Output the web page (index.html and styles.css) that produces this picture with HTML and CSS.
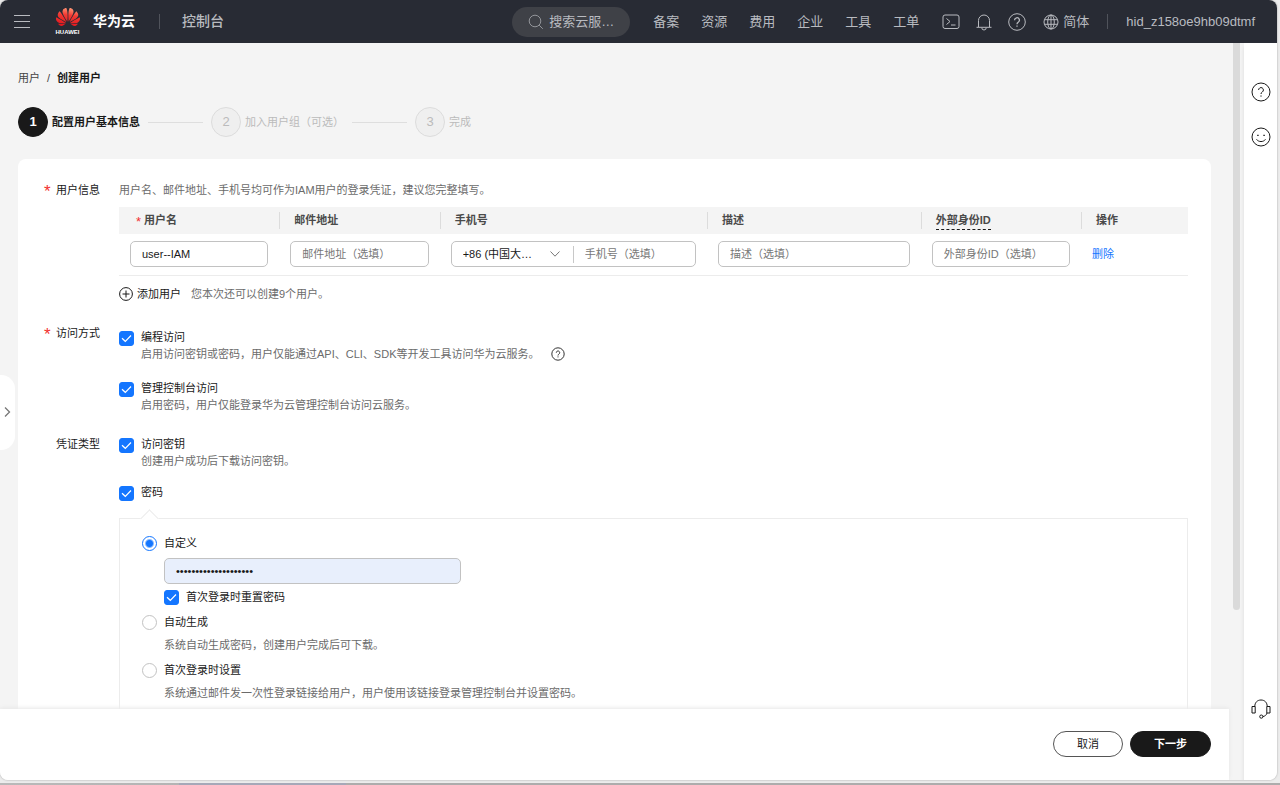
FILE: index.html
```html
<!doctype html>
<html lang="zh-CN">

<head>
    <meta charset="utf-8">
    <title>创建用户</title>

    <link rel="stylesheet" href="styles.css">
</head>

<body>
    <div class="window">
        <header class="topbar">
            <button class="icon-btn menu-btn" aria-label="菜单">
                <svg width="16" height="16" viewBox="0 0 16 16"><path d="M0 1.5h16M0 7.500h16M0 13.5h16" /></svg>
            </button>
            <a class="brand" href="#">
                <svg width="26" height="28" viewBox="0 0 26 28" aria-hidden="true">
                    <defs>
                        <linearGradient id="petal" x1="0.6" y1="0" x2="0.4" y2="1">
                            <stop offset="0" stop-color="#ff9a78" />
                            <stop offset="0.4" stop-color="#f23a33" />
                            <stop offset="1" stop-color="#e0161e" />
                        </linearGradient>
                    </defs>
                    <path transform="translate(1 -3)" fill="url(#petal)" d="M3.67 6.14S1.82 7.91 1.72 9.78v.35c.08 1.51 1.22 2.4 1.22 2.4 1.83 1.79 6.26 4.04 7.3 4.55 0 0 .06.03.1-.01l.02-.04v-.04C7.52 10.8 3.67 6.14 3.67 6.14zM9.65 18.6c-.02-.08-.1-.08-.1-.08l-7.38.26c.8 1.43 2.15 2.53 3.56 2.2.96-.25 3.16-1.78 3.88-2.3.06-.05.04-.09.04-.09zm.08-.78C6.49 15.63.21 12.28.21 12.28c-.15.46-.2.9-.21 1.3v.07c0 1.07.4 1.82.4 1.82.8 1.69 2.34 2.2 2.34 2.2.7.3 1.4.31 1.4.31.12.02 4.4 0 5.54 0 .05 0 .08-.05.08-.05v-.06c0-.03-.03-.05-.03-.05zM9.06 3.19a3.42 3.42 0 00-2.57 3.15v.41c.03.6.16 1.05.16 1.05.66 2.9 3.86 7.65 4.55 8.65.05.05.1.03.1.03a.1.1 0 00.06-.1c1.06-10.6-1.11-13.42-1.11-13.42-.32.02-1.19.23-1.19.23zm8.3 2.27s-.49-1.8-2.44-2.28c0 0-.57-.14-1.17-.22 0 0-2.18 2.81-1.12 13.43.01.07.06.08.06.08.07.03.1-.03.1-.03.72-1.03 3.9-5.76 4.55-8.64 0 0 .36-1.4.02-2.34zm-2.92 13.07s-.07 0-.09.05c0 0-.01.07.03.1.7.51 2.85 2 3.88 2.3 0 0 .16.05.43.06h.14c.69-.02 1.9-.37 3-2.26l-7.4-.25zm7.83-8.41c.14-2.06-1.94-3.97-1.94-3.98 0 0-3.85 4.66-6.67 10.8 0 0-.03.08.02.13l.04.01h.06c1.06-.53 5.46-2.77 7.28-4.54 0 0 1.15-.93 1.21-2.42zm1.52 2.14s-6.28 3.37-9.52 5.55c0 0-.05.04-.03.11 0 0 .03.06.07.06 1.16 0 5.56 0 5.67-.02 0 0 .57-.02 1.27-.29 0 0 1.56-.5 2.37-2.27 0 0 .73-1.45.17-3.14z" />
                    <text class="brand-mark" x="12.500" y="26" text-anchor="middle">HUAWEI</text>
                </svg>
                <span>华为云</span>
            </a>
            <span class="divider"></span>
            <a class="console" href="#">控制台</a>

            <button class="search">
                <svg width="16" height="16" viewBox="0 0 16 16"><circle cx="7" cy="7" r="5.8" /><path d="M11.2 11.2L14.8 14.8" /></svg>
                <span>搜索云服…</span>
            </button>
            <nav class="nav">
                <a href="#">备案</a>
                <a href="#">资源</a>
                <a href="#">费用</a>
                <a href="#">企业</a>
                <a href="#">工具</a>
                <a href="#">工单</a>
            </nav>
            <div class="tools">
                <button class="icon-btn" aria-label="CloudShell">
                    <svg width="18" height="18" viewBox="0 0 18 18"><rect x="1" y="2" width="16" height="13.5" rx="2" /><path d="M4.5 5.5l3.5 3-3.5 3M9 12h4.5" /></svg>
                </button>
                <button class="icon-btn" aria-label="消息">
                    <svg width="18" height="18" viewBox="0 0 18 18"><path d="M3.5 14V7.5a5.5 5.5 0 0 1 11 0V14M1.5 14.3h15M6.8 14.8a2.2 2.2 0 0 0 4.4 0" /></svg>
                </button>
                <button class="icon-btn" aria-label="帮助">
                    <svg width="18" height="18" viewBox="0 0 18 18"><circle cx="9" cy="9" r="8.3" /><path stroke-width="1.300" d="M6.6 7.2a2.4 2.4 0 1 1 3.6 2c-.8.5-1.2.9-1.2 2M9 12.6v1.2" /></svg>
                </button>
            </div>
            <a class="lang" href="#">
                <svg width="16" height="16" viewBox="0 0 16 16"><circle cx="8" cy="8" r="7" /><ellipse cx="8" cy="8" rx="3.3" ry="7" /><path d="M8 1v14M1.4 5.7h13.2M1.4 10.3h13.2" /></svg>
                <span>简体</span>
            </a>
            <span class="divider"></span>
            <a class="account" href="#">hid_z158oe9hb09dtmf</a>
        </header>

        <div class="workspace">
            <main class="main">
                <div class="scroll">
                    <nav class="crumbs">
                        <a href="#">用户</a><span>/</span><b>创建用户</b>
                    </nav>

                    <ol class="steps">
                        <li class="step current"><i>1</i><span>配置用户基本信息</span></li>
                        <li class="step"><i>2</i><span>加入用户组（可选）</span></li>
                        <li class="step"><i>3</i><span>完成</span></li>
                    </ol>

                    <form class="card" id="create-user">
                        <section class="row">
                            <div class="label required">用户信息</div>
                            <div class="field">
                                <p class="hint">用户名、邮件地址、手机号均可作为IAM用户的登录凭证，建议您完整填写。</p>
                                <table class="users">
                                    <thead>
                                        <tr>
                                            <th class="w15"><span class="required">用户名</span></th>
                                            <th class="w15">邮件地址</th>
                                            <th class="w25">手机号</th>
                                            <th class="w20">描述</th>
                                            <th class="w15"><span class="dashed">外部身份ID</span></th>
                                            <th class="w10">操作</th>
                                        </tr>
                                    </thead>
                                    <tbody>
                                        <tr>
                                            <td><input class="text" type="text" value="user--IAM" aria-label="用户名"></td>
                                            <td><input class="text" type="text" placeholder="邮件地址（选填）" aria-label="邮件地址"></td>
                                            <td>
                                                <div class="text phone">
                                                    <select aria-label="国家/地区">
                                                        <option>+86 (中国大…</option>
                                                    </select>
                                                    <input type="tel" placeholder="手机号（选填）" aria-label="手机号">
                                                </div>
                                            </td>
                                            <td><input class="text" type="text" placeholder="描述（选填）" aria-label="描述"></td>
                                            <td><input class="text" type="text" placeholder="外部身份ID（选填）" aria-label="外部身份ID"></td>
                                            <td><a class="link" href="#">删除</a></td>
                                        </tr>
                                    </tbody>
                                </table>
                                <div class="add">
                                    <button type="button" class="add-btn">
                                        <svg width="14" height="14" viewBox="0 0 14 14"><circle cx="7" cy="7" r="6.4" /><path d="M7 3.5v7M3.5 7h7" /></svg>
                                        <span>添加用户</span>
                                    </button>
                                    <span class="hint">您本次还可以创建9个用户。</span>
                                </div>
                            </div>
                        </section>

                        <section class="row access">
                            <div class="label required">访问方式</div>
                            <div class="field">
                                <div class="option">
                                    <input type="checkbox" id="api" checked>
                                    <div>
                                        <label for="api">编程访问</label>
                                        <p class="hint">启用访问密钥或密码，用户仅能通过API、CLI、SDK等开发工具访问华为云服务。
                                            <svg class="help" width="14" height="14" viewBox="0 0 14 14"><circle cx="7" cy="7" r="6.2" /><path d="M5.3 5.7a1.7 1.7 0 1 1 2.6 1.4c-.6.4-.9.7-.9 1.4M7 9.4v1" /></svg>
                                        </p>
                                    </div>
                                </div>
                                <div class="option">
                                    <input type="checkbox" id="console" checked>
                                    <div>
                                        <label for="console">管理控制台访问</label>
                                        <p class="hint">启用密码，用户仅能登录华为云管理控制台访问云服务。</p>
                                    </div>
                                </div>
                            </div>
                        </section>

                        <section class="row credential">
                            <div class="label">凭证类型</div>
                            <div class="field">
                                <div class="option">
                                    <input type="checkbox" id="key" checked>
                                    <div>
                                        <label for="key">访问密钥</label>
                                        <p class="hint">创建用户成功后下载访问密钥。</p>
                                    </div>
                                </div>
                                <div class="option">
                                    <input type="checkbox" id="pwd" checked>
                                    <label for="pwd">密码</label>
                                </div>

                                <div class="panel">
                                    <div class="choice">
                                        <input type="radio" id="custom" name="pwd-type" checked>
                                        <div>
                                            <label for="custom">自定义</label>
                                            <input class="text password" type="password" value="abcdefghij0123456789" aria-label="密码">
                                            <div class="option reset">
                                                <input type="checkbox" id="reset" checked>
                                                <label for="reset">首次登录时重置密码</label>
                                            </div>
                                        </div>
                                    </div>
                                    <div class="choice">
                                        <input type="radio" id="auto" name="pwd-type">
                                        <div>
                                            <label for="auto">自动生成</label>
                                            <p class="hint">系统自动生成密码，创建用户完成后可下载。</p>
                                        </div>
                                    </div>
                                    <div class="choice">
                                        <input type="radio" id="first" name="pwd-type">
                                        <div>
                                            <label for="first">首次登录时设置</label>
                                            <p class="hint">系统通过邮件发一次性登录链接给用户，用户使用该链接登录管理控制台并设置密码。</p>
                                        </div>
                                    </div>
                                </div>
                            </div>
                        </section>
                    </form>
                </div>

                <footer class="actions">
                    <button class="btn">取消</button>
                    <button class="btn primary" form="create-user" type="button">下一步</button>
                </footer>

                <div class="scrollbar"></div>
                <button class="drawer" aria-label="展开">
                    <svg width="8" height="12" viewBox="0 0 8 12"><path stroke-width="1.300" d="M1 1.5L5.500 6 1 10.5" /></svg>
                </button>
            </main>

            <aside class="rail">
                <button class="icon-btn" aria-label="帮助">
                    <svg width="20" height="20" viewBox="0 0 20 20"><circle cx="10" cy="10" r="9" /><path d="M7.6 8a2.4 2.4 0 1 1 3.7 2c-.9.6-1.3 1-1.3 2M10 13.4v1.3" /></svg>
                </button>
                <button class="icon-btn" aria-label="评价">
                    <svg width="20" height="20" viewBox="0 0 20 20"><circle cx="10" cy="10" r="9" /><path d="M6 8.3h1.8M12.2 8.3H14M5.5 12.3c2 3 7 3 9 0" /></svg>
                </button>
                <button class="icon-btn service" aria-label="客服">
                    <svg width="20" height="20" viewBox="0 0 20 20"><path d="M3.8 7.500C3.800 3.500 6.300 1 10 1s6.200 2.500 6.200 6.500M4.200 7.500H1V14h3.200zM15.800 7.500H19V14h-3.200zM16 14c-.5 2-2 3.200-4.200 3.600" /><circle cx="10.300" cy="17.600" r="1.600" /></svg>
                </button>
            </aside>
        </div>
    </div>
</body>

</html>
```
FILE: styles.css
```css
* {
    box-sizing: border-box;
}

body {
    margin: 0;
    height: 100vh;
    padding: 0 3px 5px 0;
    overflow: hidden;
    background: linear-gradient(90deg, #b9b9b9 0, #b4b4b4 14%, #a6a8b8 14%, #a6a8b8 27%, #adacac 27%) bottom / 100% 2px no-repeat #ececec;
    color: #191919;
    font: 11px/17px "Liberation Sans", "Noto Sans CJK SC", sans-serif;
}

button, input, select {
    margin: 0;
    padding: 0;
    border: 0;
    background: none;
    color: inherit;
    font: inherit;
}

a {
    color: inherit;
    text-decoration: none;
}

p {
    margin: 0;
}

svg {
    display: block;
    fill: none;
    stroke: currentColor;
}

.window {
    display: flex;
    flex-direction: column;
    height: 100%;
    border-radius: 8px;
    overflow: hidden;
    background: #f4f4f4;
    box-shadow: 0 0 2px #999;
}

/* top bar */

.topbar {
    display: flex;
    align-items: center;
    height: 43px;
    padding: 0 22px 0 14px;
    background: #282b34;
    color: #b9bbc0;
    font-size: 13px;
}

.icon-btn {
    display: block;
}

.brand {
    display: flex;
    align-items: center;
    gap: 12px;
    margin-left: 25px;
    color: #fff;
    font-size: 14px;
    font-weight: bold;
}

.brand path {
    stroke: none;
}

.brand-mark {
    fill: #fff;
    stroke: none;
    font-size: 6px;
    font-weight: bold;
}

.divider {
    width: 1px;
    height: 15px;
    margin: 0 18px;
    background: #50535b;
}

.brand + .divider {
    margin: 0 22px 0 24px;
}

.console {
    font-size: 14px;
    font-weight: 500;
}

.search {
    display: flex;
    align-items: center;
    gap: 5px;
    width: 118px;
    height: 30px;
    margin-left: auto;
    padding-left: 16px;
    border-radius: 15px;
    background: #3f4147;
}

.search svg {
    color: #93959a;
}

.nav {
    display: flex;
    gap: 22px;
    margin-left: 23px;
}

.tools {
    display: flex;
    align-items: center;
    gap: 15px;
    margin-left: 23px;
}

.lang {
    display: flex;
    align-items: center;
    gap: 4px;
    margin-left: 17px;
}

/* layout */

.workspace {
    display: flex;
    flex: 1;
    min-height: 0;
}

.main {
    position: relative;
    display: flex;
    flex: 1;
    flex-direction: column;
    min-width: 0;
}

.scroll {
    flex: 1;
    min-height: 0;
    padding: 27px 33px 0 18px;
    overflow: hidden;
}

.scrollbar {
    position: absolute;
    top: 0;
    right: 4px;
    width: 7px;
    height: 77%;
    border-radius: 0 0 4px 4px;
    background: #dadada;
}

.drawer {
    position: absolute;
    top: 45%;
    left: 0;
    width: 15px;
    height: 75px;
    padding-left: 4px;
    border-radius: 0 14px 14px 0;
    background: #fff;
    color: #777;
}

.rail {
    display: flex;
    flex-direction: column;
    align-items: center;
    gap: 25px;
    width: 33px;
    padding: 39px 0 61px;
    background: #fff;
    box-shadow: 0 4px 4px #ddd;
}

.service {
    margin-top: auto;
}

/* breadcrumb and steps */

.crumbs {
    display: flex;
    gap: 7px;
}

.crumbs a, .crumbs span {
    color: #444;
}

.steps {
    display: flex;
    margin: 20px 0 22px;
    padding: 0;
    list-style: none;
}

.step {
    display: flex;
    align-items: center;
    gap: 4px;
    color: #bbb;
}

.step:not(:last-child)::after {
    content: "";
    width: 55px;
    height: 1px;
    margin: 0 8px 0 4px;
    background: #dedede;
}

.step i {
    width: 30px;
    height: 30px;
    border: 1px solid #dcdcdc;
    border-radius: 50%;
    background: #efefef;
    font-size: 13px;
    font-style: normal;
    line-height: 28px;
    text-align: center;
}

.step.current {
    color: #191919;
    font-weight: bold;
}

.step.current i {
    border-color: #191919;
    background: #191919;
    color: #fff;
}

/* form */

.card {
    padding: 23px 23px 60px 26px;
    border-radius: 8px;
    background: #fff;
}

.row {
    display: flex;
    gap: 19px;
}

.access {
    margin-top: 22px;
}

.access .field {
    padding-top: 4px;
}

.credential {
    margin-top: 22px;
}

.label {
    width: 56px;
    flex: none;
    text-align: right;
}

.label.required {
    display: flex;
    justify-content: space-between;
}

.required::before {
    content: "*";
    color: #f23030;
    font-size: 17px;
    font-weight: normal;
    line-height: 19px;
    height: 17px;
}

th .required::before {
    margin-right: 3px;
    font-size: 13px;
    line-height: 11px;
    vertical-align: -2px;
}

.field {
    flex: 1;
    min-width: 0;
}

.hint {
    color: #6b6b6b;
}

.users {
    width: 100%;
    margin-top: 8px;
    border-collapse: collapse;
    table-layout: fixed;
}

.w10 { width: 10%; }
.w15 { width: 15%; }
.w20 { width: 20%; }
.w25 { width: 25%; }

.users th {
    height: 27px;
    padding: 0 15px;
    background: #f4f4f4;
    color: #4a4a4a;
    font-weight: bold;
    text-align: left;
}

.users th:first-child {
    padding-left: 17px;
}

.users th + th {
    background: linear-gradient(#dcdcdc, #dcdcdc) left / 1px 17px no-repeat #f4f4f4;
}

.users td {
    height: 41px;
    padding: 0 11px;
    border-bottom: 1px solid #ececec;
}

.dashed {
    display: inline-block;
    border-bottom: 1px dashed #191919;
}

.text {
    display: block;
    width: 100%;
    height: 26px;
    padding: 0 11px;
    border: 1px solid #c2c2c2;
    border-radius: 5px;
}

.text::placeholder, .phone input::placeholder {
    color: #777;
    opacity: 1;
}

.phone {
    display: flex;
    align-items: center;
}

.phone select {
    width: 110px;
    flex: none;
    appearance: none;
    background: url("data:image/svg+xml,%3Csvg xmlns='http://www.w3.org/2000/svg' width='10' height='6' fill='none' stroke='%23777'%3E%3Cpath d='M.5.5L5 5.200 9.500.5'/%3E%3C/svg%3E") right 13px center no-repeat;
}

.phone input {
    flex: 1;
    min-width: 0;
    padding-left: 11px;
    border-left: 1px solid #c8c8c8;
}

.link {
    color: #1476ff;
}

.add {
    display: flex;
    align-items: center;
    gap: 10px;
    margin-top: 10px;
}

.add-btn {
    display: flex;
    align-items: center;
    gap: 4px;
}

.option, .choice {
    display: flex;
    align-items: flex-start;
    gap: 7px;
}

.option + .option {
    margin-top: 17px;
}

.credential .option + .option {
    margin-top: 14px;
}

label {
    display: block;
}

.option .hint {
    display: flex;
    align-items: center;
}

.help {
    margin-left: 12px;
    color: #333;
}

input[type="checkbox"], input[type="radio"] {
    width: 15px;
    height: 15px;
    margin-top: 2px;
    flex: none;
    appearance: none;
}

input[type="checkbox"] {
    border: 1px solid #c2c2c2;
    border-radius: 3px;
}

input[type="checkbox"]:checked {
    border-color: #1476ff;
    background: url("data:image/svg+xml,%3Csvg xmlns='http://www.w3.org/2000/svg' width='11' height='9' fill='none' stroke='white' stroke-width='1.200'%3E%3Cpath d='M1 4.200L4.300 7.300 10 1.500'/%3E%3C/svg%3E") center no-repeat #1476ff;
}

input[type="radio"] {
    margin-top: 1px;
    border: 1px solid #c2c2c2;
    border-radius: 50%;
}

input[type="radio"]:checked {
    border-color: #1476ff;
    background: radial-gradient(circle, #1476ff 3px, #fff 5px);
}

.panel {
    position: relative;
    margin-top: 17px;
    padding: 16px 23px 24px 22px;
    border: 1px solid #ececec;
}

/* arrow pointing up at the password checkbox */
.panel::before {
    content: "";
    position: absolute;
    top: -7px;
    left: 23px;
    width: 12px;
    height: 12px;
    border: solid #ececec;
    border-width: 1px 0 0 1px;
    background: #fff;
    transform: rotate(45deg);
}

.choice + .choice {
    margin-top: 8px;
}

.choice .hint {
    margin-top: 6px;
}

.password {
    width: 297px;
    margin-top: 6px;
    background: #e8effc;
}

.reset {
    margin-top: 5px;
}

.reset input[type="checkbox"] {
    margin-top: 1px;
}

/* footer */

.actions {
    display: flex;
    justify-content: flex-end;
    gap: 7px;
    margin-right: 15px;
    padding: 22px 18px 23px;
    background: #fff;
    box-shadow: 0 -1px 4px #e6e6e6;
}

.btn {
    height: 26px;
    padding: 0 23px;
    border: 1px solid #555;
    border-radius: 13px;
}

.primary {
    border-color: #191919;
    background: #191919;
    color: #fff;
    font-weight: bold;
}
```
